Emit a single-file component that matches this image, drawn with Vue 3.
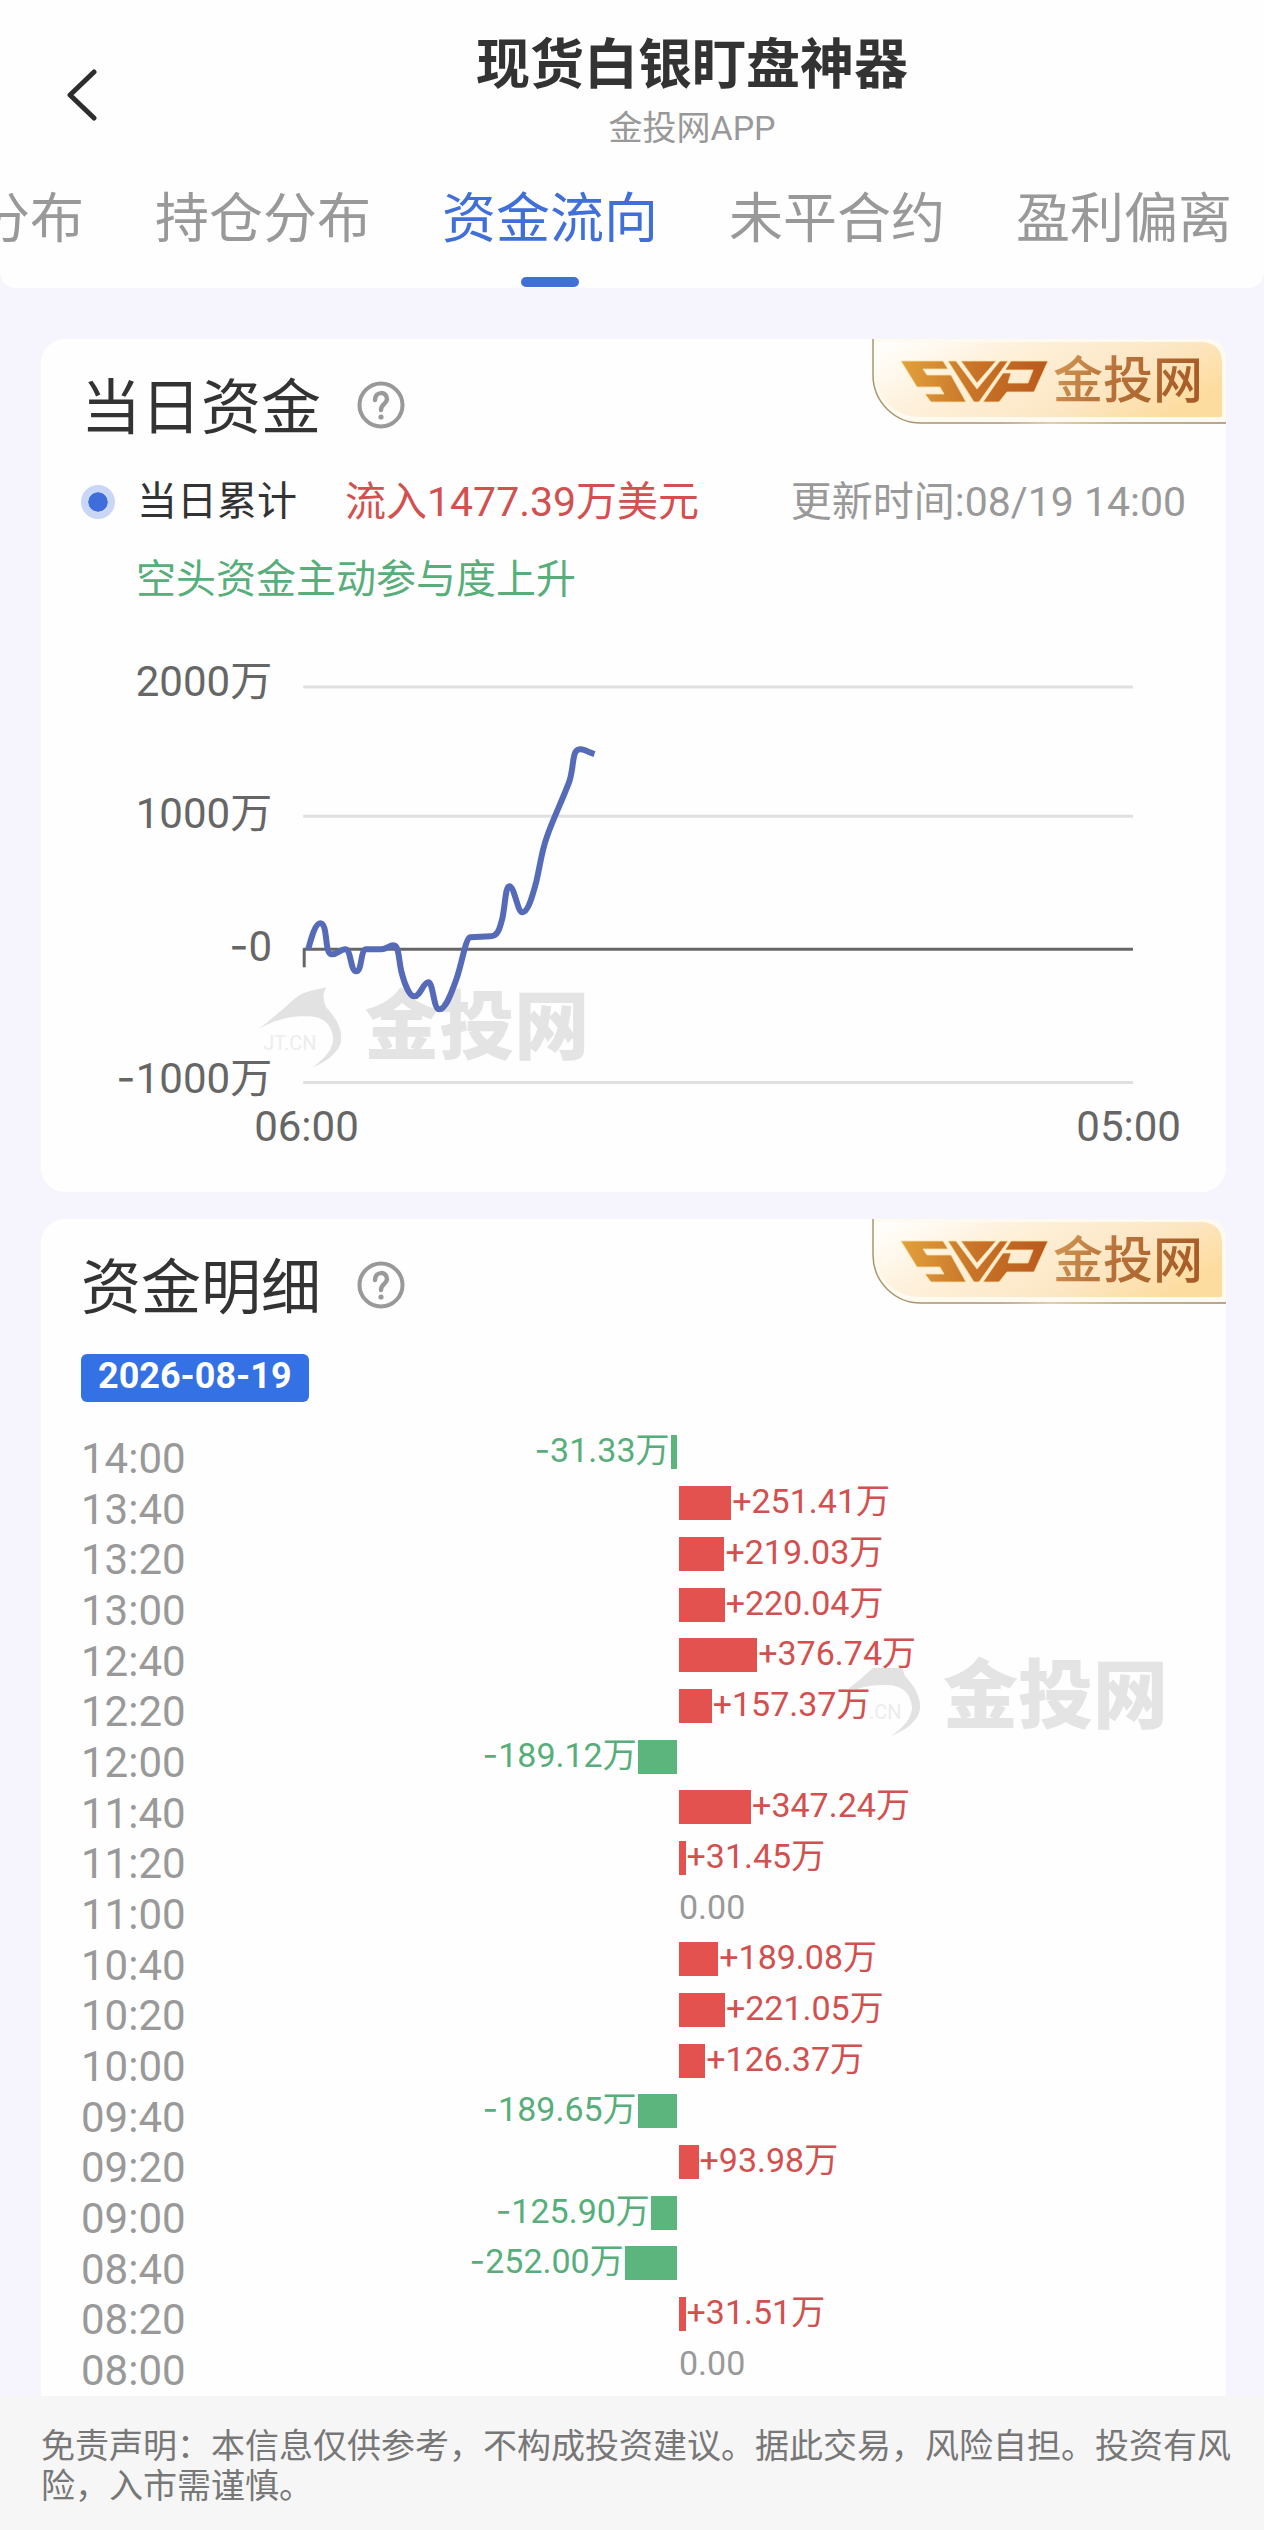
<script setup>
import { ref } from 'vue'

const tabs = ['分布', '持仓分布', '资金流向', '未平合约', '盈利偏离']
const activeTab = ref('资金流向')

const yAxis = [
  { sign: '', label: '2000万', text: 56, line: 47 },
  { sign: '', label: '1000万', text: 188, line: 176 },
  { sign: '-', label: '0', text: 321, line: 309 },
  { sign: '-', label: '1000万', text: 453, line: 442 },
]

const flows = [
  { time: '14:00', value: -31.33 },
  { time: '13:40', value: 251.41 },
  { time: '13:20', value: 219.03 },
  { time: '13:00', value: 220.04 },
  { time: '12:40', value: 376.74 },
  { time: '12:20', value: 157.37 },
  { time: '12:00', value: -189.12 },
  { time: '11:40', value: 347.24 },
  { time: '11:20', value: 31.45 },
  { time: '11:00', value: 0 },
  { time: '10:40', value: 189.08 },
  { time: '10:20', value: 221.05 },
  { time: '10:00', value: 126.37 },
  { time: '09:40', value: -189.65 },
  { time: '09:20', value: 93.98 },
  { time: '09:00', value: -125.9 },
  { time: '08:40', value: -252 },
  { time: '08:20', value: 31.51 },
  { time: '08:00', value: 0 },
]

// half of the track stands for this many 万
const TRACK_MAX = 2360

function barWidth(value) {
  return (Math.abs(value) / TRACK_MAX) * 100 + '%'
}

function formatValue(value) {
  return value === 0 ? '0.00' : Math.abs(value).toFixed(2) + '万'
}
</script>

<template>
  <div class="page">
    <!-- shared drawings -->
    <svg class="defs" width="0" height="0" aria-hidden="true">
      <defs>
        <linearGradient id="badge-bg" x1="0" y1="0.2" x2="1" y2="0.6">
          <stop offset="0" stop-color="#fffdf9"/>
          <stop offset="0.3" stop-color="#fef1dc"/>
          <stop offset="0.7" stop-color="#fce7c4"/>
          <stop offset="1" stop-color="#fddc9f"/>
        </linearGradient>
        <linearGradient id="badge-line" x1="0" y1="0" x2="1" y2="0">
          <stop offset="0" stop-color="#a8986f"/>
          <stop offset="0.35" stop-color="#a89070"/>
          <stop offset="0.5" stop-color="#d8bf96"/>
          <stop offset="0.7" stop-color="#b39a78"/>
          <stop offset="1" stop-color="#9c8a70"/>
        </linearGradient>
        <linearGradient id="logo-fill" gradientUnits="userSpaceOnUse" x1="29" y1="30" x2="176" y2="40">
          <stop offset="0" stop-color="#e2a13c"/>
          <stop offset="0.5" stop-color="#c87428"/>
          <stop offset="1" stop-color="#b9591c"/>
        </linearGradient>
        <linearGradient id="name-fill" x1="0" y1="0" x2="1" y2="0.2">
          <stop offset="0" stop-color="#d39a58"/>
          <stop offset="0.45" stop-color="#b8733a"/>
          <stop offset="1" stop-color="#a85c28"/>
        </linearGradient>
      </defs>
      <symbol id="brand" viewBox="0 0 354 85">
        <path d="M0 0H332Q354 0 354 22V84H48A48 48 0 0 1 0 36Z" fill="#fffaf0"/>
        <path d="M2 3H328Q350 3 350 25V78H50A46 46 0 0 1 2 34Z" fill="url(#badge-bg)"/>
        <path d="M1 0V36A48 48 0 0 0 49 84H354" fill="none" stroke="url(#badge-line)" stroke-width="1.5"/>
        <g fill="url(#logo-fill)" stroke="#fbe0a4" stroke-width="0.8">
          <path d="M29 22H71L76 30H51L55 36H79L94 63H59L53 55H72L68 48H45Z"/>
          <path d="M76 22H84L105 50L128 22H136L107 63H102Z"/>
          <path d="M89 22H124L105 44Z"/>
          <path d="M139 22H176L162 53H135L127 63H111L131 34H139L136 44H156L161 31H133Z"/>
        </g>
      </symbol>
      <symbol id="dolphin" viewBox="0 0 84 84">
        <path d="M1 43C18 30 29 20 38 12C48 4 58 4 69 1C65 8 66 14 69 21C83 36 88 51 81 62C75 71 66 77 55 81C67 73 76 63 76 52C74 34 62 29 46 30C28 30 13 36 1 43Z" fill="#e2e2e2"/>
      </symbol>
      <symbol id="question" viewBox="0 0 48 48">
        <g fill="none" stroke="#999" stroke-width="4">
          <circle cx="24" cy="24" r="21.5"/>
          <path d="M18 19C18 10 30 10 30 18C30 23 24 23 24 29" stroke-width="4.5" stroke-linecap="round"/>
        </g>
        <circle cx="24" cy="36" r="2.6" fill="#999"/>
      </symbol>
    </svg>

    <header class="header">
      <div class="title-bar">
        <button type="button" class="btn-back" aria-label="返回">
          <svg width="32" height="52" fill="none" stroke="#2d2d2d" stroke-width="5" stroke-linecap="round" stroke-linejoin="round" viewBox="0 0 32 52">
            <polyline points="28,3 4,26 28,49"/>
          </svg>
        </button>
        <div class="title-text">
          <h1 class="title">现货白银盯盘神器</h1>
          <p class="subtitle">金投网APP</p>
        </div>
      </div>
      <nav class="tabs">
        <button v-for="tab in tabs" :key="tab" type="button" class="tab"
                :class="{ active: tab === activeTab }" @click="activeTab = tab">
          {{ tab }}
        </button>
      </nav>
    </header>

    <main class="content">
      <section class="card">
        <svg class="brand" width="354" height="85">
          <use href="#brand"/>
          <text x="181" y="59" class="brand-name">金投网</text>
        </svg>
        <div class="card-header">
          <h2 class="card-title">当日资金</h2>
          <button type="button" class="btn-help" aria-label="说明">
            <svg width="48" height="48"><use href="#question"/></svg>
          </button>
        </div>
        <div class="summary">
          <span class="dot"></span>
          <span class="summary-label">当日累计</span>
          <span class="summary-value">流入1477.39万美元</span>
          <span class="summary-time">更新时间:08/19 14:00</span>
        </div>
        <p class="hint">空头资金主动参与度上升</p>

        <svg class="chart" viewBox="0 0 1104 540">
          <g transform="translate(176 346)">
            <use href="#dolphin" width="84" height="84"/>
            <text x="6" y="64" class="mark-site">JT.CN</text>
            <text x="107" y="67" class="mark-name">金投网</text>
          </g>
          <g v-for="row in yAxis" :key="row.line">
            <line x1="222" :y1="row.line" x2="1051" :y2="row.line"
                  :stroke="row.label === '0' ? '#666' : '#e0e0e0'" stroke-width="3"/>
            <text x="191" :y="row.text" class="axis-text" text-anchor="end"><tspan class="sign">{{ row.sign }}</tspan>{{ row.label }}</text>
          </g>
          <path d="M223 308V327" stroke="#666" stroke-width="3"/>
          <path class="curve" d="M227 309C230 298 234 283 239 283C247 283 243 313 250 314C255 315 259 309 264 309C270 309 269 331 275 331C281 331 279 309 285 309H300C305 309 308 305 312 305C318 305 317 318 320 331C323 343 328 356 333 356C339 356 342 342 347 342C352 342 352 369 358 369C364 369 369 356 375 339C381 322 384 298 389 297L409 296C416 296 418 290 421 278C424 264 424 246 428 246C433 246 436 272 441 272C446 272 450 260 455 241C459 224 460 212 465 198C471 180 481 160 488 141C492 128 491 117 494 112C498 106 504 111 513 114"/>
          <text x="173" y="501" class="axis-text">06:00</text>
          <text x="1099" y="501" class="axis-text" text-anchor="end">05:00</text>
        </svg>
      </section>

      <section class="card card-detail">
        <svg class="brand" width="354" height="85">
          <use href="#brand"/>
          <text x="181" y="59" class="brand-name">金投网</text>
        </svg>
        <div class="card-header">
          <h2 class="card-title">资金明细</h2>
          <button type="button" class="btn-help" aria-label="说明">
            <svg width="48" height="48"><use href="#question"/></svg>
          </button>
        </div>
        <span class="date">2026-08-19</span>
        <svg class="watermark" width="336" height="84">
          <use href="#dolphin" width="84" height="84"/>
          <text x="33" y="64" class="mark-site">.CN</text>
          <text x="107" y="67" class="mark-name">金投网</text>
        </svg>
        <ul class="flows">
          <li v-for="flow in flows" :key="flow.time" class="flow">
            <span class="flow-time">{{ flow.time }}</span>
            <div class="half half-left">
              <template v-if="flow.value < 0">
                <span class="flow-value out"><span class="sign">-</span>{{ formatValue(flow.value) }}</span>
                <span class="bar bar-out" :style="{ width: barWidth(flow.value) }"></span>
              </template>
            </div>
            <div class="half">
              <template v-if="flow.value > 0">
                <span class="bar bar-in" :style="{ width: barWidth(flow.value) }"></span>
                <span class="flow-value in">+{{ formatValue(flow.value) }}</span>
              </template>
              <span v-else-if="flow.value === 0" class="flow-value">{{ formatValue(flow.value) }}</span>
            </div>
          </li>
        </ul>
      </section>
    </main>

    <footer class="footer">
      免责声明：本信息仅供参考，不构成投资建议。据此交易，风险自担。投资有风险，入市需谨慎。
    </footer>
  </div>
</template>

<style>
body {
  margin: 0;
  background: #f6f5fe;
}
</style>

<style scoped>
.page {
  display: flex;
  flex-direction: column;
  min-height: 100vh;
  font-family: Roboto, "Noto Sans CJK SC", sans-serif;
  background: #f6f5fe;
  color: #333;
}

.defs { position: absolute; }

button {
  padding: 0;
  border: none;
  background: none;
  font-family: inherit;
  cursor: pointer;
}

h1, h2, p, ul { margin: 0; padding: 0; }

/* Roboto's hyphen is too short for a minus sign */
.sign { font-family: Inter, sans-serif; }

.header {
  padding-top: 34px;
  background: #fefefe;
  border-radius: 0 0 16px 16px;
}

.title-bar { display: flex; }

.btn-back {
  display: flex;
  align-items: center;
  justify-content: flex-end;
  width: 98px;
  padding-top: 4px;
}

.title-text {
  flex: 1;
  padding-left: 22px;
  text-align: center;
}

.title {
  font-size: 54px;
  line-height: 64px;
  font-weight: 700;
  color: #333;
}

.subtitle {
  margin-top: 6px;
  font-size: 34px;
  line-height: 48px;
  color: #999;
}

.tabs {
  display: flex;
  gap: 71px;
  margin-left: -24px;
  overflow: hidden;
}

.tab {
  position: relative;
  flex: none;
  padding: 36px 0;
  font-size: 54px;
  line-height: 64px;
  color: #999;
}
.tab.active { color: #416fd8; }
.tab.active::after {
  content: "";
  position: absolute;
  left: 50%;
  bottom: 1px;
  width: 58px;
  height: 10px;
  margin-left: -29px;
  border-radius: 5px;
  background: #416fd8;
}

.content {
  display: flex;
  flex-direction: column;
  gap: 27px;
  padding: 51px 38px 0 41px;
}

.card {
  position: relative;
  padding: 40px 40px 12px;
  background: #fefefe;
  border-radius: 24px;
}

.card-detail {
  padding-bottom: 0;
  border-radius: 24px 24px 0 0;
}

.brand {
  position: absolute;
  top: 0;
  right: 0;
}

.brand-name {
  font-size: 50px;
  font-weight: 500;
  fill: url(#name-fill);
}

.mark-name {
  font-size: 75px;
  font-weight: 900;
  fill: #e4e4e4;
}

.mark-site { font-size: 20px; fill: #ededed; }

.card-header {
  display: flex;
  align-items: flex-start;
  gap: 36px;
}

.card-title {
  font-size: 60px;
  line-height: 60px;
  font-weight: 400;
}

.btn-help {
  display: flex;
  padding-top: 2px;
}

.summary {
  display: flex;
  align-items: center;
  margin-top: 35px;
  font-size: 40px;
  line-height: 56px;
}

.dot {
  width: 20px;
  height: 20px;
  border: 7px solid #c9d6f6;
  border-radius: 50%;
  background: #3f6ddb;
  background-clip: padding-box;
}

.summary-label { margin-left: 22px; }
.summary-value { margin-left: 48px; font-size: 41px; color: #d2504f; }
.summary-time { margin-left: auto; font-size: 41px; color: #999; }

.hint {
  margin-top: 22px;
  padding-left: 55px;
  font-size: 40px;
  line-height: 56px;
  color: #57ae7b;
}

.chart {
  display: block;
  width: 100%;
  margin-top: 32px;
}

.axis-text { font-size: 42px; fill: #666; }

.curve {
  fill: none;
  stroke: #566bb8;
  stroke-width: 6;
  stroke-linejoin: round;
}

.date {
  display: block;
  width: fit-content;
  margin-top: 35px;
  padding: 0 17px 4px;
  border-radius: 6px;
  background: #3371e4;
  color: #fff;
  font-size: 36px;
  line-height: 44px;
  font-weight: 700;
}

.watermark {
  position: absolute;
  top: 436px;
  right: 54px;
}

.flows {
  position: relative;
  display: grid;
  grid-auto-rows: 1fr;
  min-height: 963px;
  margin-top: 31px;
  padding-right: 17px;
  list-style: none;
}

.flow {
  display: grid;
  grid-template-columns: 106px 1fr 1fr;
}

.flow-time {
  align-self: center;
  font-size: 42px;
  line-height: 50px;
  color: #999;
}

.half {
  display: flex;
  align-items: flex-start;
  gap: 1px;
  padding: 2px 0 0 1px;
}

.half-left {
  justify-content: flex-end;
  padding: 2px 1px 0 0;
}

.bar { height: 34px; }
.bar-in { background: #e3524f; }
.bar-out { background: #5bb57c; }

.flow-value {
  background: #fefefe;
  font-size: 34px;
  line-height: 30px;
  color: #999;
}
.flow-value.in { color: #d2504f; }
.flow-value.out { color: #57ae7b; }

.footer {
  flex: 1;
  padding: 30px 30px 23px 41px;
  background: #f6f6f6;
  font-size: 34px;
  line-height: 40px;
  color: #777;
}
</style>
